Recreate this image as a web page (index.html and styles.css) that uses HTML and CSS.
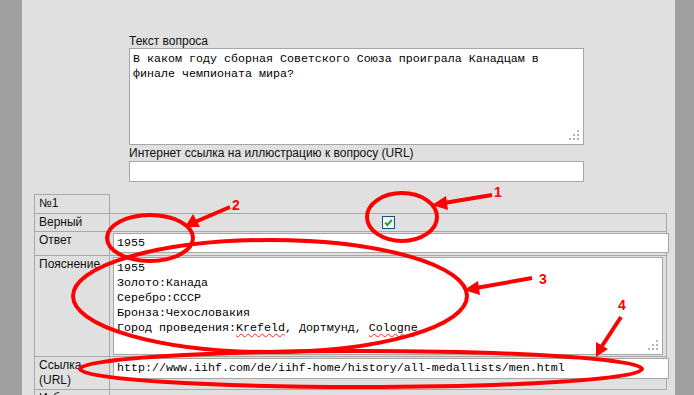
FILE: index.html
```html
<!DOCTYPE html>
<html>
    <head>
        <meta charset="UTF-8">
        <link rel="stylesheet" href="styles.css">
    </head>
    <body>
        <div class="page">
            <div class="question">
                <div class="caption">Текст вопроса</div>
                <div class="field question-text">В каком году сборная Советского Союза проиграла Канадцам в
финале чемпионата мира?<svg class="grip" width="10" height="10" viewBox="0 0 10 10"><rect x="8" y="0" width="2" height="2"/><rect x="4" y="4" width="2" height="2"/><rect x="8" y="4" width="2" height="2"/><rect x="0" y="8" width="2" height="2"/><rect x="4" y="8" width="2" height="2"/><rect x="8" y="8" width="2" height="2"/></svg></div>
                <div class="caption caption-url">Интернет ссылка на иллюстрацию к вопросу (URL)</div>
                <div class="field picture-url"></div>
            </div>

            <table class="answers">
                <colgroup>
                    <col class="col-name">
                    <col class="col-value">
                </colgroup>
                <tr class="row-num">
                    <td class="name">№1</td>
                    <td class="blank"></td>
                </tr>
                <tr class="row-right">
                    <td class="name">Верный</td>
                    <td class="center">
                        <svg class="check" width="13" height="13" viewBox="0 0 13 13">
                            <rect x="0.5" y="0.5" width="12" height="12" fill="#f4f6f8" stroke="#1c4f7c"/>
                            <path d="M3.2 6.6 L5.4 8.9 L9.8 3.9" fill="none" stroke="#1e9e2a" stroke-width="2"/>
                        </svg>
                    </td>
                </tr>
                <tr class="row-answer">
                    <td class="name">Ответ</td>
                    <td class="value"><div class="field answer">1955</div></td>
                </tr>
                <tr class="row-note">
                    <td class="name">Пояснение</td>
                    <td class="value"><div class="field note">1955
Золото:Канада
Серебро:СССР
Бронза:Чехословакия
Город проведения:<span class="typo">Krefeld</span>, Дортмунд, <span class="typo">Cologne</span><svg class="grip" width="10" height="10" viewBox="0 0 10 10"><rect x="8" y="0" width="2" height="2"/><rect x="4" y="4" width="2" height="2"/><rect x="8" y="4" width="2" height="2"/><rect x="0" y="8" width="2" height="2"/><rect x="4" y="8" width="2" height="2"/><rect x="8" y="8" width="2" height="2"/></svg></div></td>
                </tr>
                <tr class="row-link">
                    <td class="name">Ссылка<br>(URL)</td>
                    <td class="value"><div class="field link">http://www.iihf.com/de/iihf-home/history/all-medallists/men.html</div></td>
                </tr>
                <tr class="row-more">
                    <td class="name">Избранное</td>
                    <td class="blank-end"></td>
                </tr>
            </table>
        </div>

        <!-- red marks drawn over the screenshot -->
        <svg class="marks" width="694" height="395" viewBox="0 0 694 395">
            <g fill="none" stroke="#ff0000" stroke-width="4">
                <ellipse cx="402" cy="217" rx="35" ry="24"/>
                <ellipse cx="150" cy="238" rx="43" ry="23"/>
                <ellipse cx="270" cy="296" rx="197" ry="56"/>
                <ellipse cx="361" cy="369" rx="281" ry="18"/>
                <line x1="492" y1="195" x2="444" y2="203"/>
                <line x1="230" y1="207" x2="195" y2="222"/>
                <line x1="532" y1="278" x2="476" y2="288"/>
                <line x1="621" y1="317" x2="602" y2="346"/>
            </g>
            <g fill="#ff0000">
                <polygon points="432,205 446,196 448,210"/>
                <polygon points="185,227 193,214 200,227"/>
                <polygon points="464,290 478,281 480,295"/>
                <polygon points="596,357 596,342 608,349"/>
            </g>
            <g class="mark-num" fill="#ff0000">
                <text x="494" y="197">1</text>
                <text x="232" y="210">2</text>
                <text x="539" y="284">3</text>
                <text x="618" y="310">4</text>
            </g>
        </svg>
    </body>
</html>
```

FILE: styles.css
```css
body {
    margin: 0;
    background: #a0a0a0;
    position: relative;
    font-family: "Liberation Sans", Arial, sans-serif;
    font-size: 12px;
    color: #111;
}
.page {
    box-sizing: border-box;
    margin: 0 19px 0 22px;
    height: 395px;
    padding: 34px 0 0 12px;
    background: #e0e0e0;
    overflow: hidden;
}
.question {
    margin-left: 95px;
    width: 455px;
}
.caption {
    line-height: 14px;
}
.caption-url {
    margin-top: 1px;
    line-height: 15px;
}
.field {
    position: relative;
    box-sizing: border-box;
    background: #fff;
    border: 1px solid #a6a6a6;
    padding: 0 3px;
    font-family: "Liberation Mono", "Courier New", monospace;
    font-size: 11.67px;
    line-height: 15px;
    color: #000;
    white-space: pre;
}
.question-text {
    height: 97px;
    padding-top: 3px;
}
.picture-url {
    height: 21px;
}
.grip {
    position: absolute;
    right: 4px;
    bottom: 4px;
    fill: #b4b4b4;
}
.answers {
    margin-top: 12px;
    border-collapse: collapse;
    table-layout: fixed;
    width: 633px;
}
.col-name {
    width: 75px;
}
td {
    border: 1px solid #a8a8a8;
    padding: 1px 4px 0;
    vertical-align: top;
    line-height: 15px;
}
td.blank {
    border-top: none;
    border-right: none;
}
td.blank-end {
    border-right: none;
}
td.center {
    text-align: center;
    vertical-align: middle;
    padding: 0;
}
td.value {
    padding: 1px 3px 0;
}
.check {
    display: block;
    margin: 0 auto;
}
.row-num {
    height: 19px;
}
.row-right {
    height: 18px;
}
.row-answer {
    height: 24px;
}
.row-note {
    height: 101px;
}
.row-link {
    height: 33px;
}
.answer {
    width: 556px;
    height: 20px;
    line-height: 18px;
}
.note {
    width: 550px;
    height: 98px;
    padding-top: 3px;
}
.link {
    width: 556px;
    height: 21px;
    line-height: 19px;
}
.typo {
    text-decoration: underline wavy #ff2020;
    text-decoration-thickness: 1px;
    text-underline-offset: 2px;
}
.marks {
    position: absolute;
    top: 0;
    left: 0;
    pointer-events: none;
}
.mark-num {
    font-family: "Liberation Sans", Arial, sans-serif;
    font-weight: bold;
    font-size: 14px;
}
```
